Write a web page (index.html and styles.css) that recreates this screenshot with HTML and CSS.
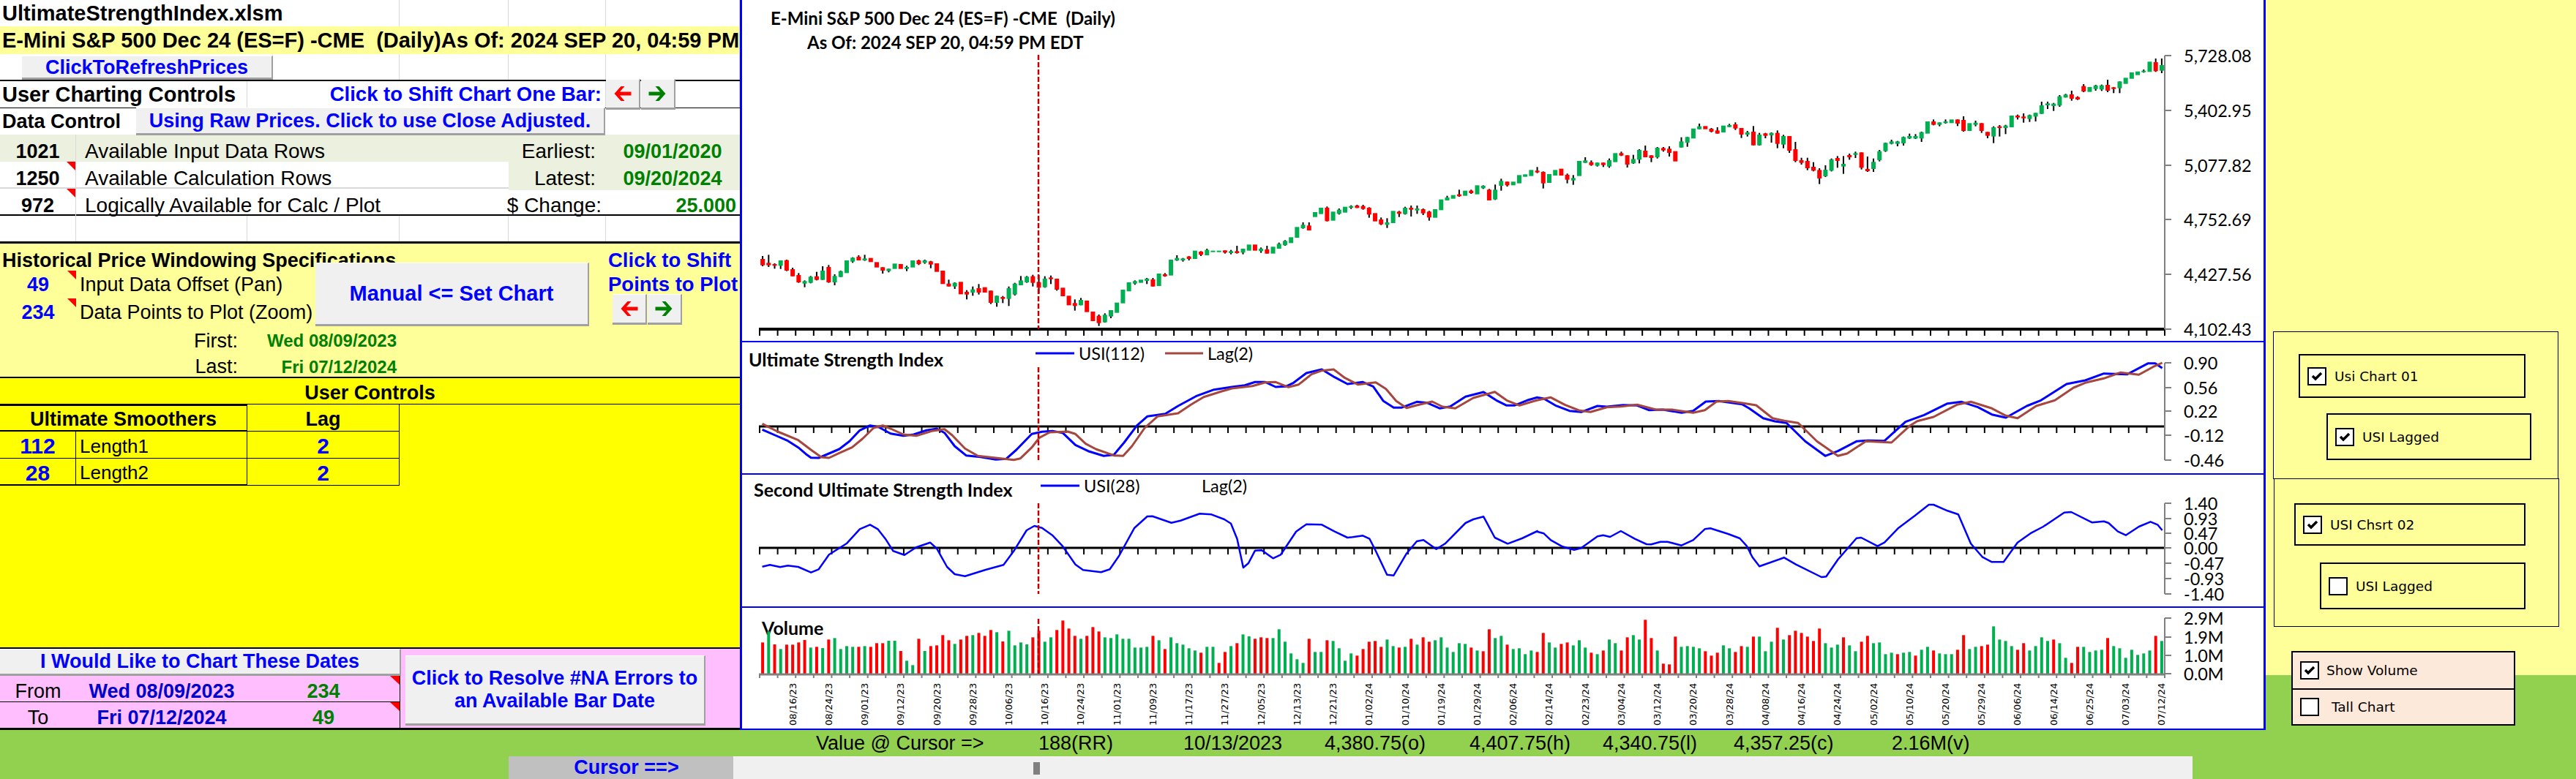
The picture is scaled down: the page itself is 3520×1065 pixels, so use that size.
FILE: index.html
```html
<!DOCTYPE html>
<html lang="en">
<head>
    <meta charset="UTF-8">
    <title>UltimateStrengthIndex.xlsm</title>
    <link rel="stylesheet" href="styles.css">
</head>
<body>
    <div class="workbook">
        <div class="top">
            <!-- Left: spreadsheet controls -->
            <aside class="sheet">
                <div class="row row-title">
                    <div class="cell span3 title">UltimateStrengthIndex.xlsm</div>
                    <div class="cell"></div><div class="cell"></div><div class="cell"></div>
                </div>
                <div class="row row-symbol">
                    <div class="cell span6 title">E-Mini S&amp;P 500 Dec 24 (ES=F) -CME  (Daily)As Of: 2024 SEP 20, 04:59 PM</div>
                </div>
                <div class="row row-refresh">
                    <div class="cell span3"></div>
                    <div class="cell"></div><div class="cell"></div><div class="cell"></div>
                </div>
                <div class="row row-controls">
                    <div class="cell span2 title">User Charting Controls</div>
                    <div class="cell span3 shift-label">Click to Shift Chart One Bar:</div>
                    <div class="cell"></div>
                </div>
                <div class="row row-data">
                    <div class="cell span6 heading">Data Control</div>
                </div>
                <div class="row row-info tint">
                    <div class="cell num">1021</div>
                    <div class="cell span3 label">Available Input Data Rows</div>
                    <div class="cell lbl-right">Earliest:</div>
                    <div class="cell date">09/01/2020</div>
                </div>
                <div class="row row-info row-grey">
                    <div class="cell num note">1250</div>
                    <div class="cell span3 label">Available Calculation Rows</div>
                    <div class="cell lbl-right tint">Latest:</div>
                    <div class="cell date tint">09/20/2024</div>
                </div>
                <div class="row row-info row-last">
                    <div class="cell num note">972</div>
                    <div class="cell span3 label">Logically Available for Calc / Plot</div>
                    <div class="cell lbl-right lbl-wide">$ Change:</div>
                    <div class="cell date date-end">25.000</div>
                </div>
                <div class="row row-blank">
                    <div class="cell"></div><div class="cell"></div><div class="cell"></div>
                    <div class="cell"></div><div class="cell"></div><div class="cell"></div>
                </div>

                <section class="windowing">
                    <div class="row w-head">
                        <div class="cell span5 heading">Historical Price Windowing Specifications</div>
                        <div class="cell link">Click to Shift</div>
                    </div>
                    <div class="row w-row">
                        <div class="cell input note">49</div>
                        <div class="cell span4 plain-label">Input Data Offset (Pan)</div>
                        <div class="cell link">Points to Plot</div>
                    </div>
                    <div class="row w-row">
                        <div class="cell input note">234</div>
                        <div class="cell span5 plain-label">Data Points to Plot (Zoom)</div>
                    </div>
                    <div class="row w-first">
                        <div class="cell"></div>
                        <div class="cell first-label">First:</div>
                        <div class="cell first-date">Wed 08/09/2023</div>
                    </div>
                    <div class="row w-last">
                        <div class="cell"></div>
                        <div class="cell first-label">Last:</div>
                        <div class="cell first-date">Fri 07/12/2024</div>
                    </div>
                </section>

                <section class="user-controls">
                    <div class="uc-title">User Controls</div>
                    <div class="uc-table">
                        <div class="uc-head">Ultimate Smoothers</div>
                        <div class="uc-lag">Lag</div>
                        <div class="uc-val">112</div>
                        <div class="uc-name">Length1</div>
                        <div class="uc-num">2</div>
                        <div class="uc-val uc-end">28</div>
                        <div class="uc-name uc-end">Length2</div>
                        <div class="uc-num">2</div>
                    </div>
                </section>

                <section class="dates">
                    <div class="dates-left">
                        <button class="btn dates-btn">I Would Like to Chart These Dates</button>
                        <div class="dates-row dates-from">
                            <span class="dates-name">From</span>
                            <span class="dates-day">Wed 08/09/2023</span>
                            <span class="dates-num">234</span>
                        </div>
                        <div class="dates-row dates-to">
                            <span class="dates-name">To</span>
                            <span class="dates-day">Fri 07/12/2024</span>
                            <span class="dates-num">49</span>
                        </div>
                    </div>
                    <button class="btn resolve-btn">Click to Resolve #NA Errors to an Available Bar Date</button>
                </section>

                <!-- Form buttons float over the cells -->
                <button class="btn refresh-btn">ClickToRefreshPrices</button>
                <button class="btn raw-btn">Using Raw Prices. Click to use Close Adjusted.</button>
                <button class="btn manual-btn">Manual &lt;= Set Chart</button>
                <button class="btn arrow bar-prev"><svg viewBox="0 0 24 20"><path class="arrow-red" d="M10 0 1 10l9 10h5L8.500 12.500H24v-5H8.500L15 0z"/></svg></button>
                <button class="btn arrow bar-next"><svg viewBox="0 0 24 20"><path class="arrow-green" d="M14 0l9 10-9 10H9l6.500-7.500H0v-5h15.500L9 0z"/></svg></button>
                <button class="btn arrow pts-prev"><svg viewBox="0 0 24 20"><path class="arrow-red" d="M10 0 1 10l9 10h5L8.500 12.500H24v-5H8.500L15 0z"/></svg></button>
                <button class="btn arrow pts-next"><svg viewBox="0 0 24 20"><path class="arrow-green" d="M14 0l9 10-9 10H9l6.500-7.500H0v-5h15.500L9 0z"/></svg></button>
            </aside>

            <!-- Middle: charts, filled by chart.js -->
            <main class="charts">
                <div class="panel panel-price" id="price"></div>
                <div class="panel panel-usi" id="usi1"></div>
                <div class="panel panel-usi2" id="usi2"></div>
                <div class="panel panel-volume" id="volume"></div>
            </main>

            <!-- Right: chart options -->
            <aside class="options">
                <div class="opt-group group-one">
                    <label class="opt opt-a"><span class="check on"><svg viewBox="0 0 22 21"><path d="M5 10l4 4 8-8"/></svg></span>Usi Chart 01</label>
                    <label class="opt opt-b"><span class="check on"><svg viewBox="0 0 22 21"><path d="M5 10l4 4 8-8"/></svg></span>USI Lagged</label>
                </div>
                <div class="opt-group group-two">
                    <label class="opt opt-c"><span class="check on"><svg viewBox="0 0 22 21"><path d="M5 10l4 4 8-8"/></svg></span>USI Chsrt 02</label>
                    <label class="opt opt-d"><span class="check"></span>USI Lagged</label>
                </div>
                <div class="opt-volume">
                    <label class="opt-line"><span class="check on"><svg viewBox="0 0 22 21"><path d="M5 10l4 4 8-8"/></svg></span>Show Volume</label>
                    <label class="opt-line tall"><span class="check"></span>Tall Chart</label>
                </div>
            </aside>
        </div>

        <div class="status">
            <span class="s-value">Value @ Cursor =&gt;</span>
            <span class="s-rr">188(RR)</span>
            <span class="s-date">10/13/2023</span>
            <span class="s-open">4,380.75(o)</span>
            <span class="s-high">4,407.75(h)</span>
            <span class="s-low">4,340.75(l)</span>
            <span class="s-close">4,357.25(c)</span>
            <span>2.16M(v)</span>
        </div>
        <div class="cursor">
            <div class="cursor-label">Cursor ==&gt;</div>
            <div class="scroll"><div class="scroll-thumb"></div></div>
        </div>
    </div>

    <script src="chart.js"></script>
</body>
</html>
```

FILE: styles.css
```css
:root {
    --blue: #0000ff;
    --dark-green: #008000;
    --pale-yellow: #ffff99;
    --pink: #ffbfff;
    --tint: #ebf1de;
    --page-green: #92d050;
    --grid: #d9d9d9;
    --btn: #f0f0f0;
    --cols: 104px 234px 208px 149px 133px 183px;
}

* {
    margin: 0;
    padding: 0;
    box-sizing: border-box;
}

body {
    width: 3520px;
    height: 1065px;
    overflow: hidden;
    background-color: var(--page-green);
    font-family: "Liberation Sans", Arial, sans-serif;
    color: #000;
}

.top {
    display: flex;
    height: 998px;
}

/* Spreadsheet */
.sheet {
    position: relative;
    width: 1011px;
    height: 998px;
    background-color: #fff;
    font-size: 27px;
}

.row {
    display: grid;
    grid-template-columns: var(--cols);
}

.cell {
    display: flex;
    align-items: center;
    min-width: 0;
    white-space: pre;
    border-right: 1px solid var(--grid);
}

.span2 { grid-column: span 2; }
.span3 { grid-column: span 3; }
.span4 { grid-column: span 4; }
.span5 { grid-column: span 5; }
.span6 { grid-column: span 6; }

.title {
    font-size: 29px;
    font-weight: bold;
    padding-left: 3px;
}

.heading {
    font-weight: bold;
    padding-left: 3px;
    border-right: none;
}

.row-title { height: 36px; }

.row-symbol {
    height: 38px;
    background-color: var(--pale-yellow);
}

.row-refresh {
    height: 37px;
    border-bottom: 2px solid #000;
}

.row-controls {
    height: 37px;
    border-bottom: 1px solid #000;
}

.shift-label {
    justify-content: flex-end;
    padding-right: 5px;
    font-weight: bold;
    font-size: 27.500px;
    color: var(--blue);
}

.row-data { height: 36px; }
.row-info { height: 37px; font-size: 28px; }
.row-info .cell { border-right-color: transparent; padding-top: 7px; }
.row-info .num { border-right-color: var(--grid); }
.row-grey { border-bottom: 2px solid var(--grid); }
.row-last { border-bottom: 2px solid #000; }
.tint { background-color: var(--tint); }

.num {
    justify-content: center;
    font-weight: bold;
    font-size: 27px;
}

.label { padding-left: 12px; }

.lbl-right {
    justify-content: flex-end;
    padding-right: 13px;
}

.lbl-wide { padding-right: 5px; }

.date {
    justify-content: center;
    color: var(--dark-green);
    font-weight: bold;
    font-size: 27px;
}

.date-end {
    justify-content: flex-end;
    padding-right: 4px;
}

.row-blank {
    height: 38px;
    border-bottom: 3px solid #000;
}

/* comment marker */
.note { position: relative; }

.note::after {
    content: "";
    position: absolute;
    top: 0;
    right: 0;
    width: 12px;
    height: 12px;
    background-color: #f00;
    clip-path: polygon(0 0, 100% 0, 100% 100%);
}

/* Windowing block */
.windowing {
    height: 184px;
    background-color: var(--pale-yellow);
    border-bottom: 2px solid #000;
}

.windowing .cell { border-right: none; }
.w-head { height: 37px; padding-top: 7px; }
.w-row { height: 38px; }
.w-first { height: 40px; }
.w-last { height: 29px; }

.link {
    font-weight: bold;
    color: var(--blue);
    padding-left: 3px;
    font-size: 27.500px;
}

.input {
    justify-content: center;
    font-weight: bold;
    color: var(--blue);
}

.plain-label { padding-left: 5px; }

.first-label {
    justify-content: flex-end;
    padding-right: 13px;
}

.first-date {
    justify-content: flex-end;
    padding-right: 4px;
    font-size: 24px;
    font-weight: bold;
    color: var(--dark-green);
}

/* User controls */
.user-controls {
    height: 370px;
    background-color: #ff0;
    border-bottom: 2px solid #000;
}

.uc-title {
    height: 36px;
    line-height: 40px;
    text-align: center;
    font-weight: bold;
    border-bottom: 1px solid #000;
}

.uc-table {
    display: grid;
    grid-template-columns: 104px 234px 208px;
    grid-auto-rows: 37px;
    width: 546px;
}

.uc-table > div {
    display: flex;
    align-items: center;
    padding-top: 4px;
}

.uc-head {
    grid-column: span 2;
    justify-content: center;
    font-weight: bold;
    border-top: 2px solid #000;
    border-bottom: 2px solid #000;
    border-right: 1px solid #000;
}

.uc-lag {
    justify-content: center;
    font-weight: bold;
    border-bottom: 1px solid #000;
    border-right: 1px solid #000;
}

.uc-val {
    justify-content: center;
    font-weight: bold;
    font-size: 30px;
    color: var(--blue);
    border-right: 1px solid #000;
    border-bottom: 1px solid #000;
}

.uc-name {
    padding-left: 5px;
    font-size: 26px;
    border-right: 1px solid #000;
    border-bottom: 1px solid #000;
}

.uc-num {
    justify-content: center;
    font-weight: bold;
    font-size: 30px;
    color: var(--blue);
    border-right: 1px solid #000;
    border-bottom: 1px solid #000;
}

.uc-table .uc-end { border-bottom: 2px solid #000; }

/* Date picker */
.dates {
    display: flex;
    height: 111px;
    background-color: var(--pink);
    border-bottom: 3px solid #000;
}

.dates-left {
    width: 547px;
    flex: none;
    border-right: 1px solid #000;
}

.dates-btn {
    display: block;
    width: 548px;
    height: 37px;
}

.dates-row {
    display: grid;
    grid-template-columns: 104px 234px 208px;
    height: 36px;
    padding-top: 6px;
    align-items: center;
    text-align: center;
    position: relative;
}

.dates-from { border-bottom: 1px solid #000; }
.dates-to { height: 35px; }

.dates-row::after {
    content: "";
    position: absolute;
    top: 0;
    right: 0;
    width: 13px;
    height: 12px;
    background-color: #f00;
    clip-path: polygon(0 0, 100% 0, 100% 100%);
}

.dates-day {
    font-weight: bold;
    color: #0000cc;
}

.dates-num {
    font-weight: bold;
    color: var(--dark-green);
}

.resolve-btn {
    flex: none;
    width: 410px;
    height: 96px;
    margin: 9px 0 0 7px;
    line-height: 31px;
    padding: 0 8px;
}

/* Excel form buttons */
.btn {
    background-color: var(--btn);
    border: none;
    border-top: 1px solid #fff;
    border-right: 2px solid #a0a0a0;
    border-bottom: 3px solid #a0a0a0;
    font-family: inherit;
    font-size: 27px;
    font-weight: bold;
    color: var(--blue);
}

.refresh-btn,
.raw-btn,
.manual-btn,
.arrow {
    position: absolute;
}

.refresh-btn { left: 30px; top: 76px; width: 343px; height: 33px; }
.raw-btn { left: 186px; top: 147px; width: 641px; height: 38px; }
.manual-btn { left: 431px; top: 359px; width: 374px; height: 87px; font-size: 29px; }

.arrow {
    width: 47px;
    height: 42px;
    display: flex;
    align-items: center;
    justify-content: center;
}

.arrow svg { width: 25px; height: 20px; }
.arrow-red { fill: #f00; }
.arrow-green { fill: var(--dark-green); }
.bar-prev { left: 828px; top: 108px; }
.bar-next { left: 876px; top: 108px; }
.pts-prev { left: 837px; top: 402px; }
.pts-next { left: 885px; top: 402px; }

/* Charts */
.charts {
    width: 2085px;
    height: 998px;
    background-color: #fff;
    border-left: 3px solid var(--blue);
    border-right: 3px solid var(--blue);
    border-bottom: 2px solid var(--blue);
}

.panel { border-bottom: 2px solid var(--blue); }
.panel svg { display: block; }
.panel-price { height: 468px; }
.panel-usi { height: 181px; }
.panel-usi2 { height: 182px; }
.panel-volume { height: 165px; border-bottom: none; }

.chart-title {
    font-family: Lato, sans-serif;
    font-size: 24px;
    font-weight: bold;
    white-space: pre;
}

.chart-sub {
    font-family: Lato, sans-serif;
    font-size: 25px;
    font-weight: bold;
}

.chart-label {
    font-family: Lato, sans-serif;
    font-size: 23.500px;
}

.chart-date {
    font-family: "DejaVu Sans", sans-serif;
    font-size: 13px;
}

/* Options */
.options {
    position: relative;
    width: 424px;
    height: 998px;
    padding-top: 453px;
    background: linear-gradient(var(--pale-yellow) 923px, var(--page-green) 923px);
    font-family: "DejaVu Sans", sans-serif;
    font-size: 18.500px;
}

.opt-group {
    width: 390px;
    height: 202px;
    border: 1px solid #000;
}

.group-one { margin-left: 10px; padding-top: 30px; }
.group-two { margin-left: 11px; padding-top: 33px; height: 203px; margin-top: -1px; }

.opt {
    display: flex;
    align-items: center;
    gap: 11px;
    border: 2px solid #000;
    padding-left: 10px;
}

.opt-a { width: 310px; height: 60px; margin-left: 34px; }
.opt-b { width: 280px; height: 64px; margin: 21px 0 0 72px; }
.opt-c { width: 316px; height: 58px; margin-left: 27px; }
.opt-d { width: 281px; height: 64px; margin: 23px 0 0 62px; }

.check {
    flex: none;
    width: 26px;
    height: 25px;
    background-color: #fff;
    border: 2px solid #000;
}

.check svg { display: block; width: 22px; height: 21px; }
.check path { fill: none; stroke: #000; stroke-width: 3.500; }

.opt-volume {
    width: 306px;
    height: 102px;
    margin: 33px 0 0 35px;
    background-color: #fde9d9;
    border: 2px solid #000;
}

.opt-line {
    display: flex;
    align-items: center;
    gap: 10px;
    height: 49px;
    padding-left: 10px;
}

.tall {
    border-top: 2px solid #000;
    gap: 17px;
}

/* Bottom bars */
.status {
    display: flex;
    align-items: center;
    height: 36px;
    padding-left: 1115px;
    font-size: 27px;
}

.s-value { width: 304px; }
.s-rr { width: 198px; }
.s-date { width: 193px; }
.s-open { width: 198px; }
.s-high { width: 182px; }
.s-low { width: 179px; }
.s-close { width: 216px; }

.cursor {
    display: flex;
    height: 31px;
    margin-left: 695px;
}

.cursor-label {
    width: 307px;
    padding-left: 15px;
    background-color: #c0c0c0;
    color: var(--blue);
    font-size: 27px;
    font-weight: bold;
    text-align: center;
}

.scroll {
    position: relative;
    width: 1994px;
    background-color: var(--btn);
    border-top: 1px solid #fff;
}

.scroll-thumb {
    position: absolute;
    left: 410px;
    top: 7px;
    width: 9px;
    height: 17px;
    background-color: #808080;
}
```

FILE: chart.js
```js
// Traced from the workbook charts. Candle y values are in 1/3 px, volume in 1/3 px from y=820.
const CANDLES = `R1062,1088,1050,1092 R1078,1088,1045,1095 R1083,1090,1080,1102 G1068,1090,1068,1103 R1067,1110,1065,1112
R1104,1133,1098,1133 R1128,1158,1120,1160 G1153,1163,1150,1178 G1135,1160,1132,1162 R1133,1148,1115,1150
G1110,1148,1092,1148 R1095,1158,1087,1160 G1132,1158,1125,1170 G1112,1136,1110,1136 G1068,1120 G1057,1073,1055,1078
R1053,1068,1047,1068 G1060,1068,1045,1070 R1058,1075 R1075,1097 R1096,1110,1096,1122 G1102,1112,1102,1117 G1081,1103
R1083,1103 G1095,1103,1090,1112 G1068,1097 R1068,1083,1065,1087 G1068,1078,1065,1082 R1072,1085,1070,1100 R1080,1115
R1110,1165 R1163,1175,1147,1175 G1160,1175,1158,1185 R1156,1207 R1197,1208,1190,1228 G1187,1200,1175,1213
R1182,1200,1165,1208 R1178,1200 R1192,1242,1192,1247 G1213,1242,1213,1258 R1218,1226,1214,1243 G1182,1226,1175,1255
G1163,1208,1160,1212 G1150,1170,1132,1170 G1135,1158,1132,1160 R1133,1160,1127,1175 R1157,1180,1128,1205
G1143,1178,1133,1180 R1138,1145,1130,1165 R1143,1188,1143,1192 R1180,1215 R1213,1252 R1243,1255,1228,1274
G1230,1252,1222,1252 R1233,1280 R1278,1317 R1295,1325,1290,1337 G1291,1322,1285,1323 G1272,1298,1272,1305 G1241,1283
G1188,1244 G1158,1195 G1153,1163,1150,1168 G1147,1160 G1143,1152,1140,1165 R1146,1175,1140,1175 G1122,1173
R1125,1133,1120,1135 G1065,1130 G1058,1068,1047,1070 G1060,1068,1058,1073 R1052,1062,1050,1068 G1028,1062
R1032,1045,1030,1050 G1025,1047,1020,1047 G1028,1034 G1028,1034 R1027,1036,1027,1040 G1030,1038,1025,1043
R1030,1038,1008,1040 G1020,1036,1020,1043 G1003,1028 R1003,1028 G1020,1030,1015,1037 R1023,1040,1008,1040 G1012,1040
G1000,1020,995,1020 G988,1006,985,1008 G973,997 G931,975 G922,936,912,938 R925,945,912,945 G870,890 G852,878
R852,907,847,908 G868,905 G860,877,855,880 G848,872 G845,852,842,857 R843,853,840,853 R845,857,840,860 R852,880,850,893
R874,908 R900,920,892,923 G912,922,895,935 G865,915 R868,877,865,890 G852,878,848,880 R852,860,843,888 G855,863,843,877
R858,875,855,882 R868,892,865,905 G858,893 G818,862 G810,822,803,822 G800,815 R797,805,778,807 G782,803
R782,792,778,795 G760,797 G762,772,760,775 R778,822,775,822 G778,818,757,820 G742,762,733,782 R745,760,745,765 G745,760
G718,752 G715,725 G697,722 R700,707,685,710 R705,752,703,773 G714,750 G697,720 R692,720 R717,737,712,752 G730,740,718,758
G660,722 G658,668,645,668 R665,677,658,680 G667,680,667,683 R667,677,667,685 G657,683,650,688 G628,665 R628,638,622,640
R637,675,637,687 G652,670,635,672 G615,655,612,670 R618,645,597,645 R637,648,637,665 G606,645,603,650 R607,617,603,622
R610,627,600,642 R620,662 G580,605,563,605 G562,585,562,602 G527,568 G518,530,507,530 R517,530 R528,540,525,543
R535,548,522,548 G515,543 G513,521,508,521 R510,527,502,533 R525,552,525,566 G543,552,537,560 R540,596,517,596
G552,596,545,597 R547,557,545,567 G545,555,543,585 R545,590,535,608 G558,593,553,608 R558,618,558,627 R612,660,582,665
R657,668,647,675 R660,690,647,698 R684,700,665,703 R697,732,690,755 G696,723,678,726 G654,700,650,703 R648,660,640,688
G672,683,640,713 R636,645,630,655 G628,635,622,648 R625,688,625,695 R693,702,642,705 G664,693,650,705 G620,657,615,662
G586,620,585,623 G580,590,573,592 G580,590,578,600 G562,588,560,597 G558,568,548,570 G558,568,550,570 G542,568,540,582
G498,548 R498,512,490,514 G502,512,502,518 G498,505,490,507 G490,505 R490,507,490,517 R492,537,477,540 G505,537
G503,512,495,518 R505,537,505,545 R541,557,541,567 G522,560,518,587 R518,525,513,560 G515,525,512,550 G474,522
R474,482,470,490 R478,485,465,503 G472,488,470,500 G463,478,463,498 G432,467,417,467 G424,432,417,447 G425,435,422,455
G395,433,390,438 G388,400,385,400 R387,405,372,413 R398,408,395,410 R353,375,345,378 G357,377 G351,365,348,372
G350,367,347,373 R348,372,327,378 R358,365,357,382 G334,362,334,382 G319,344 G297,323 G293,308 G290,296,285,298 G253,295
R255,292,240,295 G267,290,240,300`;

const VOLUME = `R175 G130 R183 G202 R184 R184 R175 R165 G196 R193 G198 R163 G157 G202 G190 G193 R193 G190 R193 R178 R178 G168 G168
R210 G250 G268 R160 G210 R190 R187 R145 R166 G181 R163 R148 G145 R136 R148 R124 G133 R171 G127 G187 G175 G183 R154 R127
G172 G154 R124 R85 R118 R148 G160 R148 R112 R130 G154 G157 G142 G160 G160 G196 G196 G193 R148 G166 R202 G154 G178 G184
G199 G208 R217 G193 G193 R259 R214 G190 R178 G142 G150 R160 R154 R157 G157 G121 G172 G220 G244 G259 R160 G214 G214 R166
G169 G199 G250 G220 R229 R202 R172 R169 R193 G163 G190 R196 G193 R160 G184 R154 R172 G166 G154 G196 G214 G178 G181 R196
G208 R211 R121 G157 G148 R184 G202 G199 G223 G208 R214 R136 G175 G196 R181 R175 G187 G166 G196 R217 G223 R208 G163 G178
R208 R154 G145 G163 R82 R157 G208 R262 R265 R151 G193 G190 G193 G199 R211 R229 R217 G187 G199 R214 R190 G193 R151 G151
G211 G172 R115 G163 R145 R127 R136 R151 R169 R118 G178 G196 G184 R154 G187 G211 R172 R148 G178 G175 G223 G217 R223 G217
G214 R229 G205 G193 R208 G220 G223 G223 R205 R145 G202 G193 R190 R184 G109 G163 G169 G190 R205 R178 G208 G190 G154 G169
R163 G178 G238 R259 R193 G193 G214 G208 G205 R157 G190 G199 G238 G205 G226 G220 G208 R148 G169`;

// USI lines, two traced runs: first with x from 1010, second with x from 2100
const USI_112 = [
    [45,382,70,405,95,428,115,455,130,482,140,497,155,498,175,480,195,462,215,430,235,385,255,365,272,372,295,398,320,407,340,402,365,385,385,378,400,395,420,450,442,488,470,494,500,505,520,502,540,465,570,400,590,391,610,388,630,395,655,445,680,470,710,490,730,485,750,435,775,365,795,328,830,317,855,285,890,245,925,218,960,207,985,200,1005,187,1025,187,1045,207,1065,205,1080,190,1105,150,1135,135,1160,167,1185,195,1215,187,1235,205,1255,265,1275,292,1290,292,1320,268,1340,272,1365,295,1385,287,1415,247,1450,228,1475,262,1495,283,1510,283,1535,262,1555,250],
    [0,250,15,255,40,283,70,305,95,310,130,285,150,288,185,281,215,283,240,302,270,300,310,313,335,305,362,267,390,265,440,278,455,295,485,335,510,348,535,355,575,430,618,490,645,470,685,430,710,427,745,428,790,350,830,322,880,275,910,268,945,290,975,320,1005,333,1050,285,1080,262,1135,195,1175,180,1215,152,1265,155,1310,110,1325,110,1340,130]
];
const LAG_2 = [
    [45,358,75,390,115,425,140,465,160,495,175,498,195,478,220,455,240,420,262,375,280,365,295,378,320,402,345,407,375,388,400,380,415,405,440,460,465,490,500,498,535,506,548,500,570,455,585,415,605,393,640,390,655,400,675,440,695,462,730,488,748,490,765,450,790,375,815,328,855,315,880,280,905,248,940,225,960,213,1000,203,1025,188,1045,187,1070,208,1090,197,1115,155,1135,140,1158,135,1180,170,1205,197,1240,188,1260,215,1280,265,1300,293,1320,282,1350,267,1370,288,1395,295,1430,252,1472,227,1495,262,1520,283,1545,267],
    [0,262,30,250,60,280,90,303,115,310,150,290,180,287,215,280,255,300,290,300,335,313,360,302,385,267,410,265,440,273,470,282,505,335,530,346,560,355,600,430,645,490,665,480,705,430,760,435,800,365,815,347,850,330,900,280,930,268,975,295,1005,325,1030,335,1070,285,1110,262,1150,210,1175,190,1215,172,1250,148,1290,157,1320,125,1340,108]
];
const USI_28 = [
    [45,944,60,937,80,946,95,940,115,945,140,968,155,955,175,895,210,848,235,790,255,772,270,790,285,830,300,880,322,896,345,865,372,845,385,870,405,945,420,975,440,983,480,957,515,937,535,880,560,795,575,777,590,785,610,815,630,860,655,935,670,958,705,967,722,955,740,900,770,785,795,738,805,737,842,764,860,755,897,727,920,730,945,750,958,767,970,830,982,948,992,930,1005,878,1018,877,1040,910,1055,895,1085,800,1105,770,1135,772,1160,800,1185,825,1195,823,1215,817,1228,830,1240,880,1262,977,1275,980,1300,890,1320,840,1333,835,1358,872,1375,850,1415,765,1430,750,1450,739,1472,825,1497,850,1525,828,1555,798],
    [0,800,15,808,30,835,55,862,80,875,95,868,130,820,142,815,157,822,180,798,210,830,235,852,245,853,265,842,280,842,310,857,335,835,360,790,372,787,410,810,435,828,450,860,462,905,477,943,530,907,555,935,610,987,620,985,645,915,685,827,695,825,730,860,745,845,775,785,810,735,840,690,850,690,880,715,903,730,930,850,955,905,975,925,1000,925,1030,845,1060,805,1085,780,1130,722,1145,720,1190,763,1215,758,1225,765,1245,800,1262,815,1290,780,1315,760,1330,772,1340,795]
];

const DATES = ['08/16/23','08/24/23','09/01/23','09/12/23','09/20/23','09/28/23','10/06/23','10/16/23','10/24/23','11/01/23','11/09/23','11/17/23','11/27/23','12/05/23','12/13/23','12/21/23','01/02/24','01/10/24','01/19/24','01/29/24','02/06/24','02/14/24','02/23/24','03/04/24','03/12/24','03/20/24','03/28/24','04/08/24','04/16/24','04/24/24','05/02/24','05/10/24','05/20/24','05/29/24','06/06/24','06/14/24','06/25/24','07/03/24','07/12/24'];

const PLOT_LEFT = 1038;
const PLOT_RIGHT = 2958;
const BAR = (PLOT_RIGHT - PLOT_LEFT) / 234;
const CURSOR_X = 1419;
const LABEL_X = 2984;
const COLORS = { R: '#ff0000', G: '#00b050' };

const barX = i => PLOT_LEFT + (i + 0.5) * BAR;

function line(x1, y1, x2, y2, color, width) {
    return `<line x1="${x1}" y1="${y1}" x2="${x2}" y2="${y2}" stroke="${color}" stroke-width="${width}"/>`;
}

function text(x, y, str, cls) {
    return `<text class="${cls}" x="${x}" y="${y}" dominant-baseline="central">${str}</text>`;
}

function xAxis(y, color, thick, tickEnd) {
    let out = '';
    for (let i = 0; i <= 78; i++) {
        const x = PLOT_LEFT + i * 3 * BAR;
        out += line(x, y, x, tickEnd, color, 2);
    }
    return out + line(PLOT_LEFT - 1, y, PLOT_RIGHT + 1, y, color, thick);
}

function yAxis(ticks) {
    const top = ticks[0][1];
    const bottom = ticks[ticks.length - 1][1];
    let out = line(PLOT_RIGHT, top, PLOT_RIGHT, bottom, '#808080', 2);
    ticks.forEach(([label, y]) => {
        out += line(PLOT_RIGHT, y, PLOT_RIGHT + 9, y, '#808080', 2);
        out += text(LABEL_X, y, label, 'chart-label');
    });
    return out;
}

function cursor(y1, y2) {
    return `<line x1="${CURSOR_X}" y1="${y1}" x2="${CURSOR_X}" y2="${y2}" stroke="#c00000" stroke-width="2.500" stroke-dasharray="7 3"/>`;
}

function tracedLine(runs, color, width) {
    const pts = [];
    runs[0].forEach((v, i, a) => { if (i % 2 === 0) pts.push([1010 + v / 1.4255, 460 + a[i + 1] / 3]); });
    runs[1].forEach((v, i, a) => { if (i % 2 === 0) pts.push([2100 + v / 1.568, 460 + a[i + 1] / 3]); });
    const attr = pts.map(p => p[0].toFixed(1) + ',' + p[1].toFixed(1)).join(' ');
    return `<polyline points="${attr}" fill="none" stroke="${color}" stroke-width="${width}" stroke-linejoin="round"/>`;
}

function mount(id, top, height, body) {
    document.getElementById(id).innerHTML =
        `<svg width="2079" height="${height}" viewBox="1014 ${top} 2079 ${height}">${body}</svg>`;
}

function drawCandles() {
    let out = '';
    CANDLES.trim().split(/\s+/).forEach((tok, i) => {
        const nums = tok.slice(1).split(',').map(n => n / 3);
        const [t, b] = nums;
        const hi = nums.length > 2 ? nums[2] : t;
        const lo = nums.length > 2 ? nums[3] : b;
        const x = barX(i);
        if (hi < t || lo > b) out += line(x, hi, x, lo, '#000', 2);
        out += `<rect x="${x - 3}" y="${t}" width="6" height="${b - t}" fill="${COLORS[tok[0]]}"/>`;
    });
    return out;
}

function drawVolume() {
    let out = '';
    VOLUME.trim().split(/\s+/).forEach((tok, i) => {
        const top = 820 + tok.slice(1) / 3;
        out += `<rect x="${barX(i) - 2}" y="${top}" width="4" height="${922 - top}" fill="${COLORS[tok[0]]}"/>`;
    });
    return out;
}

function drawDates() {
    return DATES.map((d, i) => {
        const x = barX(5 + i * 6);
        return `<text class="chart-date" x="${x}" y="992" dominant-baseline="central" transform="rotate(-90 ${x} 992)">${d}</text>`;
    }).join('');
}

mount('price', 0, 466,
    text(1053, 24, 'E-Mini S&amp;P 500 Dec 24 (ES=F) -CME  (Daily)', 'chart-title') +
    text(1103, 57, 'As Of: 2024 SEP 20, 04:59 PM EDT', 'chart-title') +
    xAxis(450, '#000', 4, 459) +
    yAxis([['5,728.08', 76], ['5,402.95', 151], ['5,077.82', 226], ['4,752.69', 300], ['4,427.56', 375], ['4,102.43', 450]]) +
    drawCandles() +
    cursor(75, 450));

mount('usi1', 468, 179,
    text(1023, 491, 'Ultimate Strength Index', 'chart-sub') +
    line(1415, 483, 1468, 483, '#0000ff', 3) + text(1474, 483, 'USI(112)', 'chart-label') +
    line(1592, 483, 1644, 483, '#a5463f', 3) + text(1650, 483, 'Lag(2)', 'chart-label') +
    xAxis(583, '#000', 3, 592) +
    yAxis([['0.90', 496], ['0.56', 530], ['0.22', 562], ['-0.12', 595], ['-0.46', 629]]) +
    tracedLine(USI_112, '#0000ff', 3) +
    tracedLine(LAG_2, '#a5463f', 3) +
    cursor(502, 629));

mount('usi2', 649, 180,
    text(1030, 669, 'Second Ultimate Strength Index', 'chart-sub') +
    line(1422, 664, 1475, 664, '#0000ff', 3) + text(1481, 664, 'USI(28)', 'chart-label') +
    text(1642, 664, 'Lag(2)', 'chart-label') +
    xAxis(749, '#000', 3, 758) +
    yAxis([['1.40', 688], ['0.93', 709], ['0.47', 729], ['0.00', 749], ['-0.47', 770], ['-0.93', 791], ['-1.40', 812]]) +
    tracedLine(USI_28, '#0000ff', 2.5) +
    cursor(688, 812));

mount('volume', 831, 165,
    text(1041, 858, 'Volume', 'chart-sub') +
    drawVolume() +
    xAxis(922, '#808080', 3, 927) +
    yAxis([['2.9M', 845], ['1.9M', 871], ['1.0M', 896], ['0.0M', 921]]) +
    drawDates() +
    cursor(846, 921));
```
